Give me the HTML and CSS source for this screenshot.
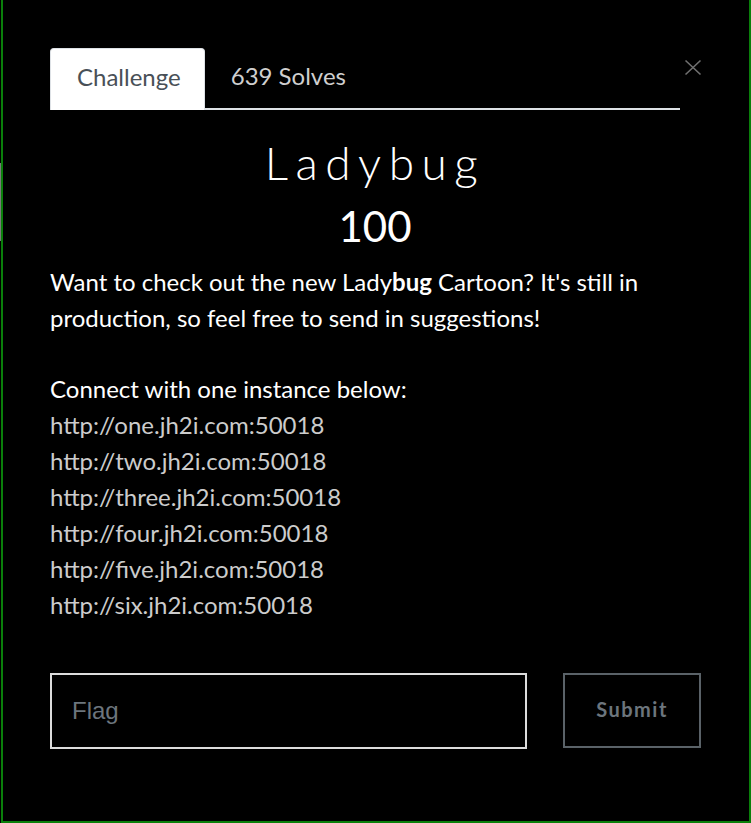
FILE: index.html
```html
<!DOCTYPE html>
<html lang="en">
<head>
<meta charset="utf-8">
<title>Ladybug</title>
<link rel="stylesheet" href="styles.css">
</head>
<body>
<div class="edge-strip"></div>
<div class="modal">
  <div class="modal-body">
    <button class="close" type="button" aria-label="Close">
      <svg width="18" height="17" viewBox="0 0 18 17"><path d="M1.5 1.5 L16.5 15.5 M16.5 1.5 L1.5 15.5" stroke="#707070" stroke-width="1.6" fill="none"/></svg>
    </button>
    <ul class="nav-tabs">
      <li class="tab tab-active">Challenge</li>
      <li class="tab">639 Solves</li>
    </ul>
    <h2 class="title">Ladybug</h2>
    <h3 class="value">100</h3>
    <div class="desc">
      <p class="para">Want to check out the new Lady<strong>bug</strong> Cartoon? It's still in production, so feel free to send in suggestions!</p>
      <p class="para para-last">Connect with one instance below:<br>
        <span class="link">http://one.jh2i.com:50018</span><br>
        <span class="link">http://two.jh2i.com:50018</span><br>
        <span class="link">http://three.jh2i.com:50018</span><br>
        <span class="link">http://four.jh2i.com:50018</span><br>
        <span class="link">http://five.jh2i.com:50018</span><br>
        <span class="link">http://six.jh2i.com:50018</span>
      </p>
    </div>
    <form class="flag-row">
      <input class="flag-input" type="text" placeholder="Flag">
      <button class="submit" type="button">Submit</button>
    </form>
  </div>
</div>
</body>
</html>
```
FILE: styles.css
```css
html, body {
  margin: 0;
  padding: 0;
  background: #000;
  height: 823px;
  overflow: hidden;
}
body {
  font-family: Lato, "Open Sans", sans-serif;
  color: #fff;
  position: relative;
}
.edge-strip {
  position: absolute;
  left: 0;
  top: 163px;
  width: 1px;
  height: 78px;
  background: #7a7a7a;
}
.modal {
  margin-left: 1px;
  width: 750px;
  height: 823px;
  box-sizing: border-box;
  border: 2px solid #0a7f0a;
  border-top: none;
  background: #000;
}
.modal-body {
  position: relative;
  padding: 48px 0 0 47px;
}
.close {
  position: absolute;
  left: 681px;
  top: 59px;
  padding: 0;
  margin: 0;
  border: none;
  background: none;
  line-height: 0;
}
.nav-tabs {
  list-style: none;
  margin: 0;
  padding: 0;
  width: 630px;
  height: 62px;
  box-sizing: border-box;
  border-bottom: 2px solid #dee2e6;
  display: flex;
}
.tab {
  height: 62px;
  box-sizing: border-box;
  padding: 0 26px 7px 26px;
  display: flex;
  align-items: center;
  font-size: 24px;
  color: #cfcfcf;
  margin-bottom: -2px;
}
.tab-active {
  background: #fff;
  color: #495057;
  border: 1px solid #dee2e6;
  border-bottom: none;
  border-radius: 4px 4px 0 0;
  padding: 0 23px 7px 26px;
}
.title {
  margin: 25px 0 0 0;
  width: 650px;
  text-align: center;
  font-size: 46px;
  line-height: 1.2;
  font-weight: 300;
  letter-spacing: 7.5px;
}
.value {
  margin: 11px 0 0 0;
  width: 650px;
  text-align: center;
  font-size: 42px;
  line-height: 1.2;
  font-weight: 400;
}
.desc {
  margin-top: 12px;
  font-size: 24px;
  line-height: 36px;
  width: 630px;
}
.para {
  margin: 0 0 35px 0;
}
.para-last {
  margin-bottom: 0;
}
.para strong {
  font-weight: 700;
}
.link {
  color: #cccccc;
}
.flag-row {
  margin-top: 50px;
  display: flex;
  gap: 36px;
  align-items: flex-start;
}
.flag-input {
  width: 477px;
  height: 76px;
  box-sizing: border-box;
  border: 2px solid #dcdcdc;
  background: #000;
  color: #fff;
  padding: 0 0 0 20px;
  margin: 0;
  font-family: "Liberation Sans", Arial, sans-serif;
  font-size: 24px;
  outline: none;
}
.flag-input::placeholder {
  color: #6c757d;
}
.submit {
  width: 138px;
  height: 75px;
  box-sizing: border-box;
  border: 2px solid #5a6268;
  background: #000;
  color: #6c757d;
  margin: 0;
  padding: 0 0 2px 0;
  font-family: Lato, sans-serif;
  font-weight: 700;
  font-size: 20px;
  letter-spacing: 1.5px;
}
```
